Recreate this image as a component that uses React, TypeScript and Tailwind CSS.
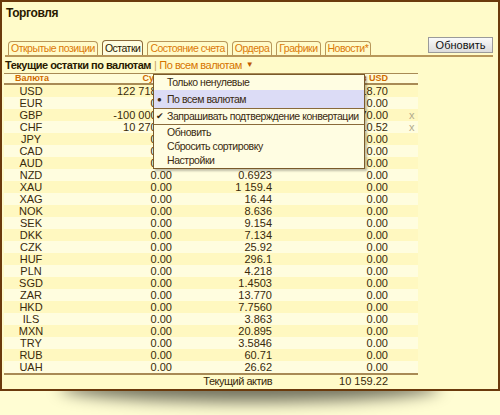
import React from "react";

type Row = { code: string; amount: string; rate: string; usd: string; close?: boolean };

const rows: Row[] = [
  { code: "USD", amount: "122 718.70", rate: "1.0000", usd: "122 718.70" },
  { code: "EUR", amount: "0.00", rate: "1.1734", usd: "0.00" },
  { code: "GBP", amount: "-100 000.00", rate: "1.2247", usd: "-122 470.00", close: true },
  { code: "CHF", amount: "10 270.00", rate: "0.9650", usd: "9 910.52", close: true },
  { code: "JPY", amount: "0.00", rate: "112.51", usd: "0.00" },
  { code: "CAD", amount: "0.00", rate: "1.2541", usd: "0.00" },
  { code: "AUD", amount: "0.00", rate: "1.2785", usd: "0.00" },
  { code: "NZD", amount: "0.00", rate: "0.6923", usd: "0.00" },
  { code: "XAU", amount: "0.00", rate: "1 159.4", usd: "0.00" },
  { code: "XAG", amount: "0.00", rate: "16.44", usd: "0.00" },
  { code: "NOK", amount: "0.00", rate: "8.636", usd: "0.00" },
  { code: "SEK", amount: "0.00", rate: "9.154", usd: "0.00" },
  { code: "DKK", amount: "0.00", rate: "7.134", usd: "0.00" },
  { code: "CZK", amount: "0.00", rate: "25.92", usd: "0.00" },
  { code: "HUF", amount: "0.00", rate: "296.1", usd: "0.00" },
  { code: "PLN", amount: "0.00", rate: "4.218", usd: "0.00" },
  { code: "SGD", amount: "0.00", rate: "1.4503", usd: "0.00" },
  { code: "ZAR", amount: "0.00", rate: "13.770", usd: "0.00" },
  { code: "HKD", amount: "0.00", rate: "7.7560", usd: "0.00" },
  { code: "ILS", amount: "0.00", rate: "3.863", usd: "0.00" },
  { code: "MXN", amount: "0.00", rate: "20.895", usd: "0.00" },
  { code: "TRY", amount: "0.00", rate: "3.5846", usd: "0.00" },
  { code: "RUB", amount: "0.00", rate: "60.71", usd: "0.00" },
  { code: "UAH", amount: "0.00", rate: "26.62", usd: "0.00" },
];

const tabs = ["Открытые позиции", "Остатки", "Состояние счета", "Ордера", "Графики", "Новости*"];

const cols = "grid grid-cols-[54px_114px_100px_116px_30px]";

const App = () => {
  return (
    <div className="relative h-[415px] w-[500px] overflow-hidden bg-[#fffdd3] font-['Liberation_Sans',Arial,sans-serif] text-[#3a2a0a]">
      {/* shadow under the window */}
      <div className="absolute left-[60px] right-[60px] top-[372px] h-[30px] rounded-[50%] bg-black/55 blur-[8px]" />

      {/* WINDOW */}
      <div className="relative z-10 h-[391px] border-2 border-[#6b3a0c] bg-[#fffbc9]">
        {/* TITLE */}
        <div className="h-[39px] pl-[4px] pt-[3px] text-[12px] font-bold leading-[16px] tracking-[-0.4px] text-[#2a1a00]">Торговля</div>

        {/* TABS */}
        <div className="ml-[3px] mr-[5px] flex h-[16px] items-end border-b-2 border-[#b8975a]">
          <div className="flex flex-1 items-end gap-[4px] pl-[3px]">
            {tabs.map((t, i) => (
              <div
                key={t}
                className={
                  i === 1
                    ? "h-[15px] whitespace-nowrap rounded-t-[4px] border border-b-0 border-[#8a6a3a] bg-[#fffde0] px-[2px] text-[10.5px] leading-[14px] tracking-[-0.5px] text-[#2a1a00]"
                    : "h-[14px] whitespace-nowrap rounded-t-[4px] border border-b-0 border-[#b8975a] px-[2px] text-[10.5px] leading-[13px] tracking-[-0.5px] text-[#dc7a08]"
                }
              >
                {t}
              </div>
            ))}
          </div>
          <button className="mb-[2px] h-[16px] w-[65px] shrink-0 whitespace-nowrap border border-[#9a9a9a] bg-gradient-to-b from-[#fafafa] to-[#dcdcdc] text-[11px] leading-[14px] text-[#111]">
            Обновить
          </button>
        </div>

        {/* SUBHEADER */}
        <div className="flex h-[16px] items-center whitespace-nowrap pl-[3px] text-[11px] leading-[14px] tracking-[-0.5px]">
          <span className="font-bold text-[#2a1a00]">Текущие остатки по валютам</span>
          <span className="mx-[3px] text-[#c8a060]">|</span>
          <span className="text-[#d67400]">По всем валютам</span>
          <span className="ml-[4px] text-[8px] text-[#c05a00]">▼</span>
        </div>

        {/* TABLE */}
        <div className="ml-[2px] w-[414px]">
          <div className={`${cols} h-[12px] items-center whitespace-nowrap border-t border-b-2 border-[#a88a55] bg-[#fffcd8] text-[9px] font-bold leading-[9px] text-[#d06a00]`}>
            <div className="pl-[2px] text-center">Валюта</div>
            <div className="text-right">Сумма</div>
            <div className="text-right">Курс</div>
            <div className="text-right">Сумма в USD</div>
            <div />
          </div>

          {rows.map((r, i) => (
            <div
              key={r.code}
              className={`${cols} h-[12px] whitespace-nowrap text-[11px] leading-[12px] ${i % 2 === 1 ? "bg-[#fffddf]" : "bg-[#fff8c0]"}`}
            >
              <div className="text-center">{r.code}</div>
              <div className="text-right">{r.amount}</div>
              <div className="text-right">{r.rate}</div>
              <div className="text-right">{r.usd}</div>
              <div className="pl-[21px] text-[#b2aa8c]">{r.close ? "x" : ""}</div>
            </div>
          ))}

          <div className={`${cols} h-[15px] whitespace-nowrap border-t-2 border-[#a88a55] leading-[13px]`}>
            <div />
            <div />
            <div className="text-right text-[11px] tracking-[-0.5px]">Текущий актив</div>
            <div className="text-right text-[11px]">10 159.22</div>
            <div />
          </div>
        </div>

        {/* DROPDOWN MENU */}
        <div className="absolute left-[151px] top-[72px] z-20 w-[212px] whitespace-nowrap border border-[#7a5a2a] bg-[#fffde2] pt-[1px] text-[10.5px] leading-[13px] tracking-[-0.45px] text-[#3a2a10] shadow-[2px_2px_2px_rgba(0,0,0,0.25)]">
          <div className="flex h-[13px] items-center pl-[13px]">Только ненулевые</div>
          <div className="mt-[1px] flex h-[18px] items-center bg-[#dcdcf6]">
            <span className="w-[13px] pl-[3px] text-[8px]">●</span>
            <span>По всем валютам</span>
          </div>
          <div className="flex h-[17px] items-center border-t border-b border-[#8a6a3a]">
            <span className="w-[13px] pl-[2px] text-[9px]">✔</span>
            <span>Запрашивать подтверждение конвертации</span>
          </div>
          <div className="flex h-[14px] items-center pl-[13px]">Обновить</div>
          <div className="flex h-[14px] items-center pl-[13px]">Сбросить сортировку</div>
          <div className="flex h-[15px] items-center pl-[13px]">Настройки</div>
        </div>
      </div>
    </div>
  );
};

export default App;
